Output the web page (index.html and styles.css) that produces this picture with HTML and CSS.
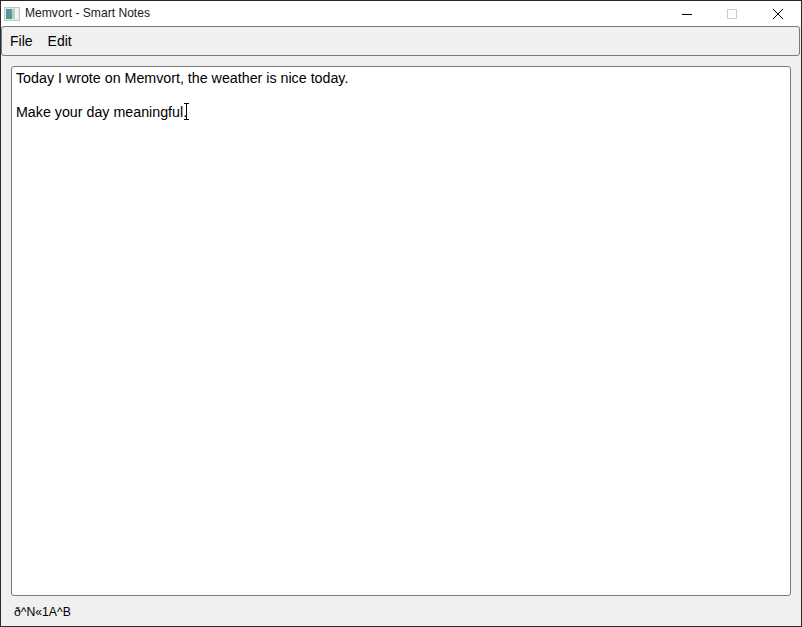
FILE: index.html
```html
<!DOCTYPE html>
<html lang="en">
<head>
<meta charset="utf-8">
<title>Memvort - Smart Notes</title>
<link rel="stylesheet" href="styles.css">
</head>
<body>
<div class="window">
  <header class="titlebar">
    <svg class="app-icon" width="16" height="16" viewBox="0 0 16 16">
      <rect x="0.5" y="1.5" width="15" height="13" fill="#e4e9e9" stroke="#c2c8c8"/>
      <rect x="2" y="3" width="6" height="10" fill="#4f9a96"/>
      <rect x="5" y="3" width="3" height="5" fill="#6f8db2"/>
      <rect x="8" y="3" width="3" height="10" fill="#b4d2c0"/>
      <rect x="11" y="3" width="3" height="10" fill="#f4f6f6"/>
    </svg>
    <span class="title">Memvort - Smart Notes</span>
    <div class="controls">
      <button class="ctl" aria-label="Minimize"><svg width="10" height="10" viewBox="0 0 10 10"><path d="M0 5.5H10" stroke="#000" fill="none"/></svg></button>
      <button class="ctl" aria-label="Maximize"><svg width="10" height="10" viewBox="0 0 10 10"><rect x="0.5" y="0.5" width="9" height="9" stroke="#cccccc" fill="none"/></svg></button>
      <button class="ctl ctl-close" aria-label="Close"><svg width="10" height="10" viewBox="0 0 10 10"><path d="M0 0L10 10M10 0L0 10" stroke="#000" fill="none"/></svg></button>
    </div>
  </header>
  <nav class="menubar">
    <span class="menu-item">File</span>
    <span class="menu-item">Edit</span>
  </nav>
  <main class="content">
    <div class="editor">
      <p class="line">Today I wrote on Memvort, the weather is nice today.</p>
      <p class="line"><span class="last">Make your day meaningful.<svg class="ibeam" width="5" height="17" viewBox="0 0 5 17"><path d="M0 .5H5M2.5 1V16M0 16.5H5" stroke="#000" fill="none"/></svg></span></p>
    </div>
  </main>
  <footer class="statusbar">ð^N«1A^B</footer>
</div>
</body>
</html>
```
FILE: styles.css
```css
* { box-sizing: border-box; }
html, body { margin: 0; height: 100%; }
body {
  font-family: "Liberation Sans", Arial, sans-serif;
  color: #000;
  background: #f0f0f0;
}
.window {
  width: 802px;
  height: 627px;
  display: flex;
  flex-direction: column;
  border: 1px solid #2b2b2b;
  border-top-color: #262626;
  background: #f0f0f0;
}
.titlebar {
  height: 25px;
  flex: none;
  display: flex;
  align-items: center;
  background: #fff;
  padding-left: 3px;
}
.app-icon { flex: none; }
.title {
  margin-left: 5px;
  margin-bottom: 2px;
  font-size: 12.1px;
  color: #1a1a1a;
}
.controls { margin-left: auto; display: flex; height: 100%; }
.ctl {
  width: 45px;
  height: 100%;
  padding: 0 2px 0 0;
  border: 0;
  background: transparent;
  display: flex;
  align-items: center;
  justify-content: center;
}
.ctl-close { width: 46px; padding: 0; }
.ctl svg { display: block; }
.menubar {
  height: 30px;
  flex: none;
  display: flex;
  align-items: center;
  gap: 15px;
  padding: 0 8px;
  background: #f0f0f0;
  border: 1px solid #7a7a7a;
  border-radius: 3px;
  margin-right: 1px;
  font-size: 14px;
}
.content {
  flex: 1;
  min-height: 0;
  padding: 10px 10px 0;
  display: flex;
}
.editor {
  flex: 1;
  background: #fff;
  border: 1px solid #7a7a7a;
  border-radius: 3px;
  padding: 3px 4px;
  font-size: 14.26px;
  line-height: 17px;
}
.line { margin: 0 0 17px; }
.last { position: relative; }
.ibeam { position: absolute; left: 100%; top: -1px; margin-left: -3px; }
.statusbar {
  height: 30px;
  flex: none;
  display: flex;
  align-items: center;
  padding: 2px 0 0 13px;
  font-size: 12.2px;
}
```
